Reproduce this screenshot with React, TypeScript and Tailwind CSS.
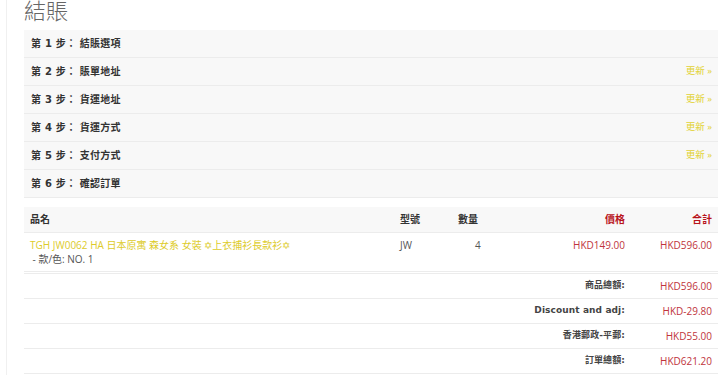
const steps = [
  { n: 1, label: "結賬選項", edit: false },
  { n: 2, label: "賬單地址", edit: true },
  { n: 3, label: "貨運地址", edit: true },
  { n: 4, label: "貨運方式", edit: true },
  { n: 5, label: "支付方式", edit: true },
  { n: 6, label: "確認訂單", edit: false },
];

const totals = [
  { label: "商品總額:", value: "HKD596.00" },
  { label: "Discount and adj:", value: "HKD-29.80" },
  { label: "香港郵政-平郵:", value: "HKD55.00" },
  { label: "訂單總額:", value: "HKD621.20" },
];

const bold = "font-['DejaVu_Sans','Noto_Sans_CJK_TC',sans-serif] font-bold";

export default function App() {
  return (
    <div className="w-[722px] h-[375px] overflow-hidden bg-white font-['Open_Sans','Noto_Sans_CJK_TC',sans-serif] text-[10px] text-[#555]">
      <div className="flex h-full">
        <div className="w-[7px] border-r border-[#f0f0f0]" />
        <div className="flex-1 pl-[17px] pr-[4px]">
          <h1 className="text-[22px] leading-[24px] font-light text-[#666] -mt-[2px] mb-[8px]">結賬</h1>

          <div className="flex flex-col">
            {steps.map((s) => (
              <div
                key={s.n}
                className="h-[28px] flex items-center justify-between bg-[#f8f8f8] border-b border-[#ececec] pl-[7px] pr-[6px]"
              >
                <span className={`${bold} text-[10px] text-[#333] tracking-[0.2px]`}>
                  第 {s.n} 步： {s.label}
                </span>
                {s.edit && <span className="text-[#e2d234] text-[9.5px]">更新 »</span>}
              </div>
            ))}
          </div>

          <div className="mt-[9px]">
            <div className="h-[26px] flex items-center bg-[#f8f8f8] border-b border-[#ececec] pl-[6px] pr-[6px]">
              <span className={`${bold} text-[#333] w-[370px]`}>品名</span>
              <span className={`${bold} text-[#333] w-[58px]`}>型號</span>
              <span className={`${bold} text-[#333] w-[60px]`}>數量</span>
              <span className={`${bold} text-[#b8141c] w-[107px] text-right`}>價格</span>
              <span className={`${bold} text-[#b8141c] flex-1 text-right`}>合計</span>
            </div>
            <div className="h-[39px] flex items-start pt-[6px] border-b border-[#ececec] pl-[6px] pr-[6px]">
              <div className="w-[370px] flex flex-col leading-[13px]">
                <span className="text-[#ddcb2a]">TGH JW0062 HA 日本原寓 森女系 女裝 ✡上衣捕衫長款衫✡</span>
                <span className="text-[#555] mt-[1px]">&nbsp;- 款/色: NO. 1</span>
              </div>
              <span className="w-[58px] leading-[13px]">JW</span>
              <span className="w-[60px] leading-[13px] pl-[17px]">4</span>
              <span className="w-[107px] leading-[13px] text-right text-[#c0343c]">HKD149.00</span>
              <span className="flex-1 leading-[13px] text-right text-[#c0343c]">HKD596.00</span>
            </div>
            <div className="border-t border-[#ececec] mt-[1px]">
              {totals.map((t) => (
                <div
                  key={t.label}
                  className="h-[25px] flex items-center border-b border-[#ececec] pr-[6px]"
                >
                  <span className={`${bold} text-[#444] text-[9px] tracking-[0.1px] flex-1 text-right`}>{t.label}</span>
                  <span className="w-[87px] text-right text-[#c0343c]">{t.value}</span>
                </div>
              ))}
            </div>
          </div>
        </div>
      </div>
    </div>
  );
}
